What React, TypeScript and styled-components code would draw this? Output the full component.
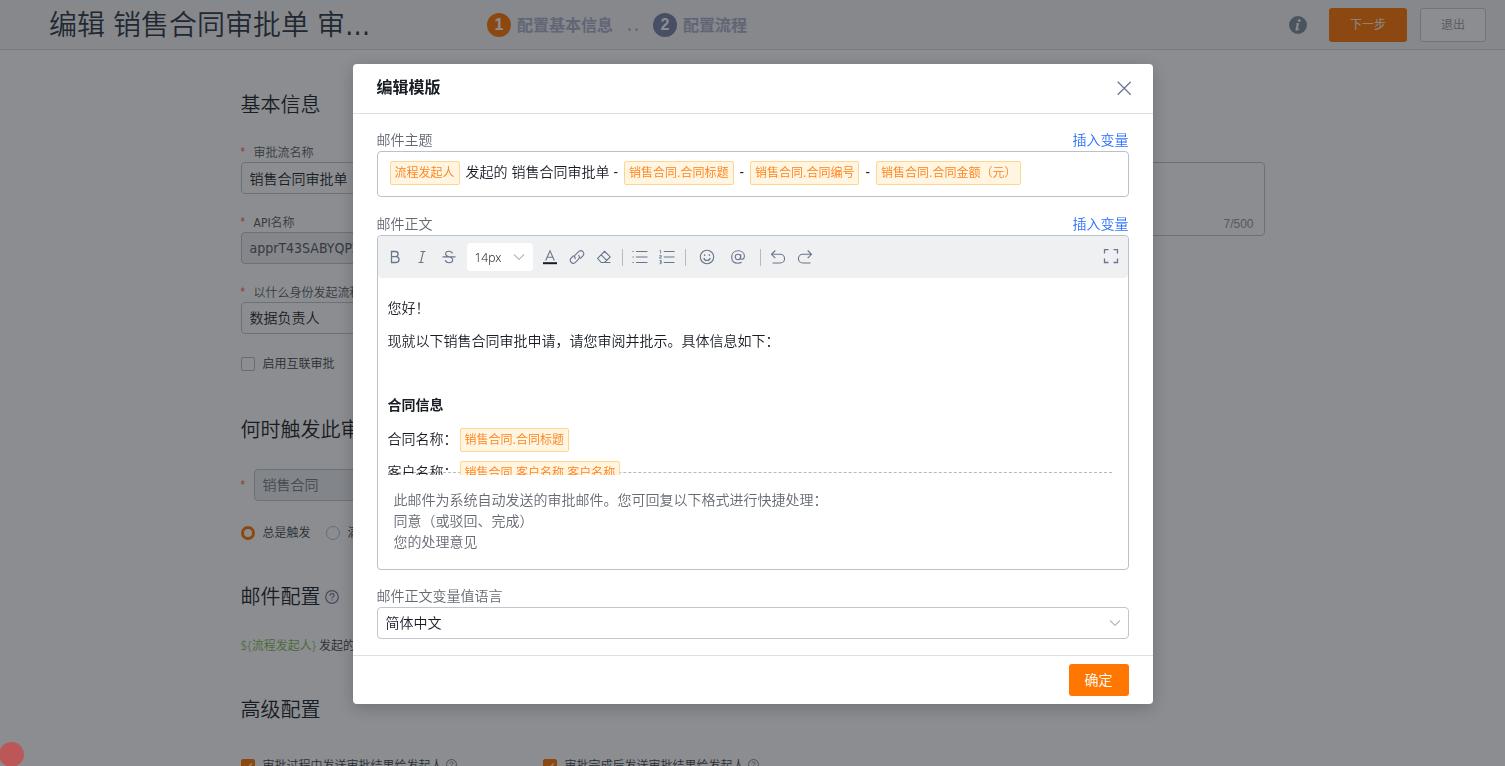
import React from "react";
import styled, { createGlobalStyle, css } from "styled-components";

const GlobalStyle = createGlobalStyle`
  * { box-sizing: border-box; }
  body {
    margin: 0;
    background: #ffffff;
    color: #181c25;
    font-family: "DejaVu Sans Condensed", "Noto Sans CJK SC", sans-serif;
    font-size: 14px;
    font-weight: 350;
    line-height: 21px;
  }
  button, input, select, textarea { font: inherit; color: inherit; margin: 0; }
  button { padding: 0; border: 0; background: none; cursor: pointer; }
  h1, h2, p { margin: 0; }
`;

const Page = styled.div`
  height: 100vh;
  overflow: hidden;
`;

const TopBar = styled.header`
  display: flex;
  align-items: center;
  height: 50px;
  padding: 0 19px 0 49px;
  background: #f4f4f7;
  border-top: 1px solid #e5f4ff;
  border-bottom: 1px solid #d9d9e3;
`;

const PageTitle = styled.h1`
  flex: none;
  width: 438px;
  padding-top: 2px;
  font-size: 28px;
  line-height: 42px;
  font-weight: 350;
  color: #2a3442;
`;

const Steps = styled.ol`
  display: flex;
  align-items: center;
  flex: 1;
  margin: 0;
  padding: 0;
  list-style: none;
  font-size: 16px;
  font-weight: 700;
  color: #acafc9;
`;

const Step = styled.li`
  display: flex;
  align-items: center;
  gap: 6px;
`;

const StepNumber = styled.span<{ $active?: boolean }>`
  width: 24px;
  height: 24px;
  border-radius: 50%;
  background: ${(p) => (p.$active ? "#ff7700" : "#7880a8")};
  color: #ffffff;
  font: bold 16px/24px "Liberation Sans", sans-serif;
  text-align: center;
`;

const StepDots = styled.li`
  display: flex;
  gap: 4px;
  margin: 8px 15px 0 15px;
  i { width: 3px; height: 3px; border-radius: 50%; background: #a9bdd8; }
`;

const TopActions = styled.div`
  display: flex;
  align-items: center;
  gap: 13px;
  svg { margin-right: 9px; }
`;

const TopButton = styled.button<{ $primary?: boolean }>`
  height: 34px;
  border-radius: 3px;
  font-size: 12px;
  ${(p) =>
    p.$primary
      ? css`
          width: 78px;
          background: #ff7700;
          color: #ffffff;
        `
      : css`
          width: 66px;
          border: 1px solid #c9cdd4;
          color: #91959e;
          background: #ffffff;
        `}
`;

const Main = styled.main`
  max-width: 1024px;
  margin: 0 auto;
  padding-top: 41px;
`;

const Section = styled.section`
  margin-bottom: 40px;
`;

const SectionTitle = styled.h2<{ $tight?: boolean }>`
  display: flex;
  align-items: center;
  gap: 4px;
  margin-bottom: ${(p) => (p.$tight ? 23 : 25)}px;
  font-size: 20px;
  line-height: 28px;
  font-weight: 350;
`;

const FormGrid = styled.div`
  display: grid;
  grid-template-columns: 1fr 1fr;
  column-gap: 60px;
`;

const FormColumn = styled.div`
  display: flex;
  flex-direction: column;
  gap: 18px;
`;

const FormField = styled.div`
  display: flex;
  flex-direction: column;
`;

const RequiredLabel = styled.label`
  display: flex;
  height: 20px;
  font-size: 12px;
  line-height: 22px;
  color: #545861;
`;

const Star = styled.span`
  flex: none;
  width: 13px;
  font-size: 10px;
  line-height: 20px;
  color: #ff522a;
`;

const controlBox = css`
  width: 100%;
  height: 32px;
  padding: 0 8px;
  border: 1px solid #c1c5ce;
  border-radius: 4px;
  background: #ffffff;
  font-size: 14px;
  outline: none;
  appearance: none;
`;

const TextInput = styled.input`
  ${controlBox}
  &:disabled { background: #f0f1f5; color: #545861; }
`;

const SelectInput = styled.select`
  ${controlBox}
  opacity: 1;
  &:disabled { background: #eceef2; color: #73777f; }
`;

const Description = styled.div`
  display: flex;
  flex-direction: column;
  height: 74px;
  border: 1px solid #c1c5ce;
  border-radius: 4px;
  textarea {
    flex: 1;
    padding: 6px 8px;
    border: 0;
    outline: 0;
    resize: none;
    background: transparent;
  }
  span {
    padding: 0 10px 1px;
    font: 12px/20px "Liberation Sans", sans-serif;
    color: #91959e;
    text-align: right;
  }
`;

const Choice = styled.label`
  display: flex;
  align-items: center;
  gap: 8px;
  font-size: 12px;
  line-height: 20px;
  color: #3a3e48;
`;

const Tick = styled.input`
  appearance: none;
  width: 14px;
  height: 14px;
  border: 1px solid #b8bac8;
  border-radius: 2px;
  background: #ffffff;
`;

const TickBox = styled.span`
  display: grid;
  align-items: center;
  justify-items: center;
  input, svg { grid-area: 1 / 1; }
  input:checked { border-color: #ff7700; background: #ff7700; }
  svg { pointer-events: none; visibility: hidden; }
  input:checked + svg { visibility: visible; }
`;

const Radio = styled.input`
  appearance: none;
  width: 14px;
  height: 14px;
  border: 1px solid #b8bac8;
  border-radius: 50%;
  &:checked { border: 3px solid #ff7700; }
`;

const CheckLine = styled.div`
  padding: 20px 0 2px;
`;

const ObjectRow = styled.div`
  display: flex;
  align-items: center;
  width: 482px;
`;

const RadioRow = styled.div`
  display: flex;
  gap: 15px;
  margin-top: 22px;
`;

const MailPreview = styled.p`
  font-family: "Noto Sans", "Noto Sans CJK SC", sans-serif;
  font-size: 12px;
  line-height: 20px;
  color: #3a3e48;
  span { color: #77b84e; }
`;

const OptionRow = styled.div`
  display: grid;
  grid-template-columns: 302px 1fr;
  padding-top: 7px;
`;

const Bubble = styled.span`
  position: fixed;
  z-index: 3;
  left: -1px;
  bottom: -1px;
  width: 25px;
  height: 25px;
  border-radius: 50%;
  background: #bb5659;
`;

const Mask = styled.div`
  position: fixed;
  z-index: 1;
  inset: 0;
  display: flex;
  justify-content: center;
  align-items: flex-start;
  padding-top: 64px;
  background: rgba(24, 27, 34, 0.5);
`;

const Dialog = styled.div`
  width: 800px;
  max-width: 100%;
  border-radius: 4px;
  background: #ffffff;
  box-shadow: 0 4px 16px rgba(0, 0, 0, 0.2);
`;

const DialogHeader = styled.div`
  display: flex;
  align-items: center;
  justify-content: space-between;
  height: 50px;
  padding: 0 20px 2px 24px;
  border-bottom: 1px solid #dcdee8;
  h2 { font-size: 16px; line-height: 24px; font-weight: 700; }
`;

const IconButton = styled.button`
  display: flex;
  color: #68758a;
`;

const DialogBody = styled.div`
  display: flex;
  flex-direction: column;
  gap: 16px;
  padding: 16px 24px;
`;

const FieldHead = styled.div`
  display: flex;
  justify-content: space-between;
  color: #666a73;
  a { color: #2a70ff; text-decoration: none; }
`;

const SubjectBox = styled.div`
  height: 46px;
  margin-bottom: 1px;
  padding: 8px 10px;
  border: 1px solid #b8c2cc;
  border-radius: 4px;
  line-height: 25px;
  outline: none;
`;

const Tag = styled.span`
  display: inline-block;
  height: 24px;
  margin: 0 2px;
  padding: 0 4px;
  border: 1px solid #ffd591;
  border-radius: 2px;
  background: #fff5e1;
  color: #ff8018;
  font-size: 12px;
  line-height: 22px;
  vertical-align: middle;
`;

const Editor = styled.div`
  display: flex;
  flex-direction: column;
  height: 335px;
  border: 1px solid #b8c2cc;
  border-radius: 4px;
`;

const Toolbar = styled.div`
  display: flex;
  align-items: center;
  flex: none;
  height: 42px;
  padding: 0 3px 0 4px;
  border-radius: 4px;
  background: #eff0f2;
`;

const Tool = styled.button<{ $wide?: boolean }>`
  display: flex;
  align-items: center;
  justify-content: center;
  width: ${(p) => (p.$wide ? 31 : 27)}px;
  height: 28px;
  color: #68758a;
`;

const SizePicker = styled.div`
  display: flex;
  align-items: center;
  width: 66px;
  height: 28px;
  margin: 0 4px;
  padding: 0 8px;
  border-radius: 4px;
  background: #ffffff;
  select {
    flex: 1;
    min-width: 0;
    padding: 0;
    border: 0;
    outline: 0;
    appearance: none;
    background: transparent;
    font-family: "Noto Sans", sans-serif;
    font-size: 12px;
  }
`;

const Divider = styled.span`
  width: 1px;
  height: 17px;
  margin: 0 4px;
  background: #b4bac6;
`;

const ToolGroup = styled.div`
  display: flex;
  padding: 0 2px;
`;

const PushRight = styled.div`
  margin-left: auto;
`;

const EditorContent = styled.div`
  position: relative;
  z-index: 1;
  flex: none;
  height: 197px;
  margin-bottom: -3px;
  padding: 20px 10px 0;
  overflow: hidden;
  outline: none;
  p { height: 21px; margin-bottom: 12px; white-space: nowrap; }
`;

const BlankLine = styled.p`
  && { height: 19px; }
`;

const EditorNote = styled.div`
  margin: 0 16px 0 10px;
  padding: 17px 6px;
  border-top: 1px dashed #b4bac0;
  color: #666a73;
`;

const LanguageSelect = styled.div`
  display: grid;
  align-items: center;
  select, svg { grid-area: 1 / 1; }
  svg { justify-self: end; margin-right: 8px; pointer-events: none; }
`;

const DialogFooter = styled.div`
  display: flex;
  justify-content: flex-end;
  padding: 8px 24px;
  border-top: 1px solid #dcdee8;
`;

const Confirm = styled.button`
  width: 60px;
  height: 32px;
  border-radius: 3px;
  background: #ff7700;
  color: #ffffff;
`;

type IconProps = { size?: number; children: React.ReactNode };
const Icon = ({ size = 16, children }: IconProps) => (
  <svg width={size} height={size} viewBox="0 0 16 16" fill="none" stroke="currentColor" strokeWidth="1.1" aria-hidden="true">
    {children}
  </svg>
);

const HelpIcon = ({ size = 14 }: { size?: number }) => (
  <svg width={size} height={size} viewBox="0 0 14 14" fill="none" stroke="#737a9a" strokeWidth="1.2" aria-hidden="true">
    <circle cx="7" cy="7" r="6.3" />
    <path d="M5 5.7C5 4.4 5.8 3.7 7 3.7s2 .7 2 1.8c0 1.300-2 1.500-2 3" />
    <path d="M7 9.400v1.200" />
  </svg>
);

const Chevron = () => (
  <svg width="12" height="12" viewBox="0 0 12 12" fill="none" stroke="#b4b8c6" strokeWidth="1.1" aria-hidden="true">
    <path d="M1 3.500l5 5 5-5" />
  </svg>
);

const CheckBox = ({ checked = false }: { checked?: boolean }) => (
  <TickBox>
    <Tick type="checkbox" defaultChecked={checked} />
    <svg width="10" height="10" viewBox="0 0 10 10" fill="none" stroke="#ffffff" strokeWidth="1.2" aria-hidden="true">
      <path d="M1.500 5l2.500 2.500L8.700 2.500" />
    </svg>
  </TickBox>
);

export default function App() {
  return (
    <>
      <GlobalStyle />
      <Page>
        <TopBar>
          <PageTitle>编辑 销售合同审批单 审…</PageTitle>
          <Steps>
            <Step>
              <StepNumber $active>1</StepNumber>配置基本信息
            </Step>
            <StepDots aria-hidden="true">
              <i />
              <i />
            </StepDots>
            <Step>
              <StepNumber>2</StepNumber>配置流程
            </Step>
          </Steps>
          <TopActions>
            <svg width="18" height="18" viewBox="0 0 18 18" aria-hidden="true">
              <circle cx="9" cy="9" r="9" fill="#7d8c9c" />
              <circle cx="10.2" cy="4.6" r="1.4" fill="#fff" />
              <path d="M7 7.600l3.200-.5-1.500 5.600c-.1.5.3.5 1.400-.6l.4.3C9.400 14 8.500 14.500 7.600 14.500c-.9 0-1.300-.6-1-1.600l1.100-4c.1-.5-.1-.7-.8-.7z" fill="#fff" />
            </svg>
            <TopButton $primary type="button">下一步</TopButton>
            <TopButton type="button">退出</TopButton>
          </TopActions>
        </TopBar>

        <Main>
          <Section>
            <SectionTitle $tight>基本信息</SectionTitle>
            <FormGrid>
              <FormColumn>
                <FormField>
                  <RequiredLabel htmlFor="flow-name"><Star>*</Star>审批流名称</RequiredLabel>
                  <TextInput id="flow-name" defaultValue="销售合同审批单" />
                </FormField>
                <FormField>
                  <RequiredLabel htmlFor="api-name"><Star>*</Star>API名称</RequiredLabel>
                  <TextInput id="api-name" disabled defaultValue="apprT43SABYQPZ" />
                </FormField>
                <FormField>
                  <RequiredLabel htmlFor="identity"><Star>*</Star>以什么身份发起流程</RequiredLabel>
                  <SelectInput id="identity">
                    <option>数据负责人</option>
                  </SelectInput>
                </FormField>
              </FormColumn>
              <FormField>
                <RequiredLabel htmlFor="description">描述</RequiredLabel>
                <Description>
                  <textarea id="description" defaultValue="销售合同审批单" />
                  <span>7/500</span>
                </Description>
              </FormField>
            </FormGrid>
            <CheckLine>
              <Choice><CheckBox />启用互联审批</Choice>
            </CheckLine>
          </Section>

          <Section>
            <SectionTitle>何时触发此审批流程</SectionTitle>
            <ObjectRow>
              <Star>*</Star>
              <SelectInput disabled aria-label="触发对象">
                <option>销售合同</option>
              </SelectInput>
            </ObjectRow>
            <RadioRow>
              <Choice><Radio type="radio" name="trigger" defaultChecked />总是触发</Choice>
              <Choice><Radio type="radio" name="trigger" />满足条件时触发</Choice>
            </RadioRow>
          </Section>

          <Section>
            <SectionTitle>邮件配置<HelpIcon /></SectionTitle>
            <MailPreview><span>{"${流程发起人}"}</span> 发起的 销售合同审批单</MailPreview>
          </Section>

          <Section>
            <SectionTitle>高级配置</SectionTitle>
            <OptionRow>
              <Choice><CheckBox checked /><span>审批过程中发送审批结果给发起人 <HelpIcon size={11} /></span></Choice>
              <Choice><CheckBox checked /><span>审批完成后发送审批结果给发起人 <HelpIcon size={11} /></span></Choice>
            </OptionRow>
          </Section>
        </Main>
        <Bubble />
      </Page>

      <Mask>
        <Dialog role="dialog" aria-modal="true" aria-labelledby="dialog-title">
          <DialogHeader>
            <h2 id="dialog-title">编辑模版</h2>
            <IconButton type="button" aria-label="关闭">
              <Icon size={18}><path d="M2.400 2.400l11.600 11.600M14 2.400L2.400 14" /></Icon>
            </IconButton>
          </DialogHeader>

          <DialogBody>
            <div>
              <FieldHead>
                <span id="subject-label">邮件主题</span>
                <a href="#subject">插入变量</a>
              </FieldHead>
              <SubjectBox id="subject" role="textbox" aria-labelledby="subject-label" contentEditable suppressContentEditableWarning>
                <Tag>流程发起人</Tag> 发起的 销售合同审批单 - <Tag>销售合同.合同标题</Tag> - <Tag>销售合同.合同编号</Tag> - <Tag>销售合同.合同金额（元）</Tag>
              </SubjectBox>
            </div>

            <div>
              <FieldHead>
                <span id="body-label">邮件正文</span>
                <a href="#mail-body">插入变量</a>
              </FieldHead>
              <Editor>
                <Toolbar role="toolbar" aria-label="格式">
                  <Tool type="button" aria-label="加粗">
                    <Icon><path d="M4.500 2.500h4a2.600 2.600 0 0 1 0 5.200h-4zM4.500 7.700h4.600a2.900 2.900 0 0 1 0 5.800H4.500z" strokeWidth="1.300" /></Icon>
                  </Tool>
                  <Tool type="button" aria-label="斜体">
                    <Icon><path d="M6.500 2.500h5M4.500 13.500h5M9.300 2.500l-2.600 11" /></Icon>
                  </Tool>
                  <Tool type="button" aria-label="删除线">
                    <Icon><path d="M11.500 4.500C11 3 9.800 2.200 8 2.200c-2 0-3.400 1-3.400 2.600C4.600 6.500 6 7.200 8 7.700c2.300.6 3.700 1.300 3.700 3.100 0 1.800-1.500 3-3.700 3-2 0-3.400-.9-3.700-2.600M1.500 7.900h13" /></Icon>
                  </Tool>
                  <SizePicker>
                    <select aria-label="字号"><option>14px</option></select>
                    <Chevron />
                  </SizePicker>
                  <Tool type="button" aria-label="文字颜色">
                    <Icon>
                      <path d="M3.700 11.500L8 1.800l4.300 9.700M5.200 8.200h5.600" />
                      <path d="M1 14.200h14" stroke="#181c25" strokeWidth="2" />
                    </Icon>
                  </Tool>
                  <Tool type="button" aria-label="链接">
                    <Icon>
                      <path d="M6.600 9.900a3 3 0 0 1 0-4.200L9.900 2.400a3 3 0 0 1 4.200 4.200l-2.900 2.900" />
                      <path d="M9.400 6.200a3 3 0 0 1 0 4.200l-3.300 3.200a3 3 0 0 1-4.200-4.200l2.900-2.900" />
                    </Icon>
                  </Tool>
                  <Tool type="button" aria-label="清除格式">
                    <Icon><path d="M1.600 9.300l7-7 5.600 5.600-5.600 5.600H5.200zM5.200 5.800l5.500 5.500M5 13.500h9.500" /></Icon>
                  </Tool>
                  <Divider />
                  <Tool type="button" aria-label="无序列表">
                    <Icon>
                      <path d="M4 2.500h11.500M4 8h11.500M4 13.500h11.500" />
                      <path d="M.5 2.500h1.300M.5 8h1.300M.5 13.500h1.300" />
                    </Icon>
                  </Tool>
                  <Tool type="button" aria-label="有序列表">
                    <Icon>
                      <path d="M4.800 2.500h10.700M4.800 8h10.700M4.800 13.500h10.700" />
                      <path d="M.6 1.500h1V4.500M.5 6.500h1.800v1.400H.8v1.400h1.700M.5 11.500h1.700v1.500H1v0h1.200v1.700H.5" strokeWidth=".8" />
                    </Icon>
                  </Tool>
                  <Divider />
                  <ToolGroup>
                    <Tool $wide type="button" aria-label="表情">
                      <Icon>
                        <circle cx="8" cy="8" r="6.700" />
                        <path d="M4.800 9c.4 1.700 1.600 2.500 3.200 2.500s2.800-.8 3.200-2.500M5.700 5.300v1.700M10.300 5.300v1.700" />
                      </Icon>
                    </Tool>
                    <Tool $wide type="button" aria-label="提及">
                      <Icon>
                        <circle cx="7.900" cy="8" r="2.700" />
                        <path d="M10.900 5.200l-.4 3.900c0 2 3.900 1.600 3.900-1.800 0-3.200-2.600-5.500-6.200-5.500C4.300 1.800 1.700 4.500 1.700 8.200c0 3.600 2.400 6 6.200 6 1.500 0 2.700-.3 3.700-.9" />
                      </Icon>
                    </Tool>
                  </ToolGroup>
                  <Divider />
                  <Tool type="button" aria-label="撤销">
                    <Icon><path d="M5.300 1.500L1.500 5.300l3.800 3.800M1.500 5.300h8.700a4.300 4.300 0 0 1 0 8.700H2.500" /></Icon>
                  </Tool>
                  <Tool type="button" aria-label="重做">
                    <Icon><path d="M10.700 1.500l3.800 3.800-3.800 3.800M14.500 5.300H5.800a4.300 4.300 0 0 0 0 8.700h7.700" /></Icon>
                  </Tool>
                  <PushRight>
                    <Tool type="button" aria-label="全屏">
                      <Icon><path d="M1.500 4.500v-4h4M10.500.5h4v4M14.500 9.500v4h-4M5.500 13.500h-4v-4" strokeWidth="1.300" /></Icon>
                    </Tool>
                  </PushRight>
                </Toolbar>
                <EditorContent id="mail-body" role="textbox" aria-multiline="true" aria-labelledby="body-label" contentEditable suppressContentEditableWarning>
                  <p>您好！</p>
                  <p>现就以下销售合同审批申请，请您审阅并批示。具体信息如下：</p>
                  <BlankLine><br /></BlankLine>
                  <p><strong>合同信息</strong></p>
                  <p>合同名称：<Tag>销售合同.合同标题</Tag></p>
                  <p>客户名称：<Tag>销售合同.客户名称.客户名称</Tag></p>
                </EditorContent>
                <EditorNote>
                  <p>此邮件为系统自动发送的审批邮件。您可回复以下格式进行快捷处理：</p>
                  <p>同意（或驳回、完成）</p>
                  <p>您的处理意见</p>
                </EditorNote>
              </Editor>
            </div>

            <div>
              <FieldHead>
                <label htmlFor="language">邮件正文变量值语言</label>
              </FieldHead>
              <LanguageSelect>
                <SelectInput id="language"><option>简体中文</option></SelectInput>
                <Chevron />
              </LanguageSelect>
            </div>
          </DialogBody>

          <DialogFooter>
            <Confirm type="button">确定</Confirm>
          </DialogFooter>
        </Dialog>
      </Mask>
    </>
  );
}
